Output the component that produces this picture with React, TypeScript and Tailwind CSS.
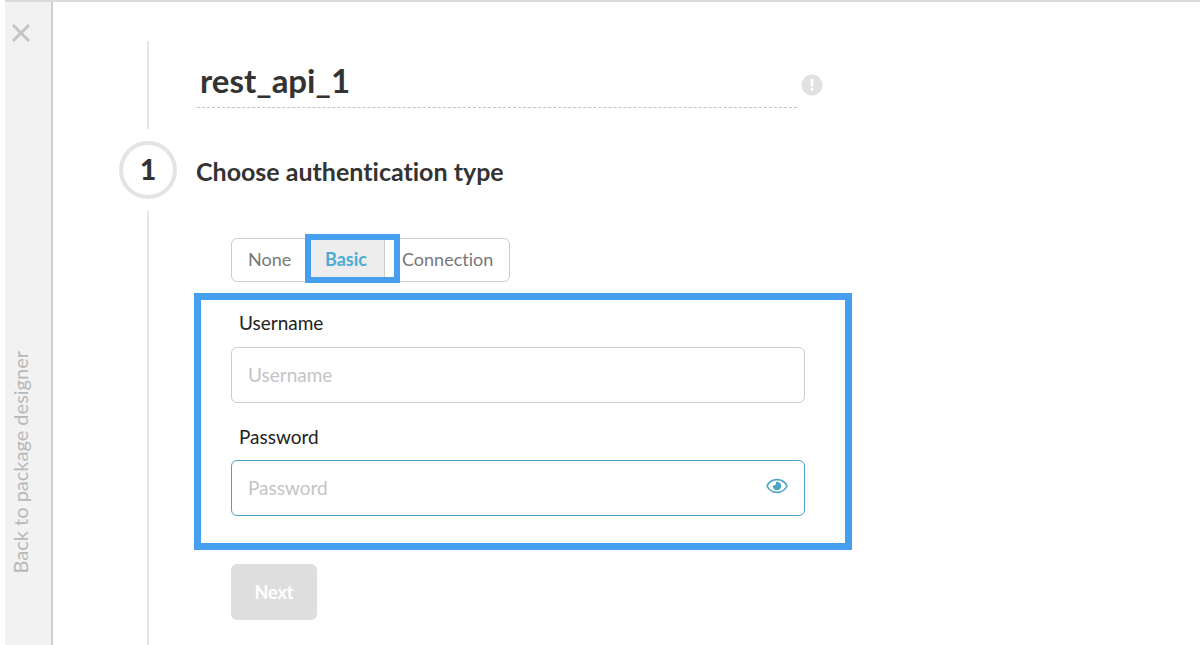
import { useState } from "react";

const types = [
  { name: "None", size: "w-[76px] pl-4" },
  { name: "Basic", size: "w-[77px] pl-[17px]" },
  { name: "Connection", size: "w-[124px] pl-[17px]" },
];

function Sidebar() {
  return (
    <aside className="flex w-12 shrink-0 flex-col items-start justify-between border-r-2 border-[#cfcfcf] bg-[#f2f2f2] pt-[21px] pb-[72px]">
      <button type="button" aria-label="Close" className="ml-[6px]">
        <svg className="h-5 w-5" viewBox="0 0 20 20" fill="none" stroke="#c4c4c4" strokeWidth="3">
          <path d="M2 2 18 18M18 2 2 18" />
        </svg>
      </button>
      <a href="#designer" className="ml-[3px] rotate-180 text-xl leading-6 whitespace-nowrap text-[#b8b8b8] [writing-mode:vertical-rl]">
        Back to package designer
      </a>
    </aside>
  );
}

function Timeline() {
  return (
    <div className="flex w-[58px] shrink-0 flex-col items-center pt-[39px]">
      <div className="h-[88px] w-0.5 bg-[#e6e6e6]" />
      <div className="my-3 flex h-[58px] w-[58px] shrink-0 items-center justify-center rounded-full border-4 border-[#e4e4e4] pb-0.5 text-[28px] leading-8 font-black">
        1
      </div>
      <div className="w-0.5 flex-1 bg-[#e6e6e6]" />
    </div>
  );
}

function EyeIcon() {
  return (
    <svg className="h-4 w-[22px]" viewBox="0 0 22 16" fill="none">
      <path d="M1 8C5-.5 17-.5 21 8 17 16.500 5 16.500 1 8Z" stroke="#4ba3c7" strokeWidth="1.600" />
      <circle cx="11" cy="8" r="4.200" fill="#4ba3c7" />
      <path d="M6.500 3.500H10V5.600A1.900 1.900 0 0 1 8.200 7.400H6.500Z" fill="#fff" />
    </svg>
  );
}

export default function App() {
  const [active, setActive] = useState("Basic");
  const [title, setTitle] = useState("rest_api_1");
  const field =
    "h-14 w-full rounded-md border bg-white px-4 pb-0.5 text-[19px] outline-none placeholder:text-[#c4c4c4] placeholder:opacity-100";

  return (
    <div className="flex min-h-screen bg-white pl-[5px] font-['Lato',sans-serif] text-[#333] [font-variant-ligatures:none]">
      <div className="flex flex-1 border-t-2 border-[#dadada]">
        <Sidebar />
        <main className="flex min-w-0 flex-1 pl-[66px]">
          <Timeline />
          <form className="ml-[17px] w-full max-w-[658px]" onSubmit={(e) => e.preventDefault()}>
            <div className="flex items-center pt-[55px] pl-[3px]">
              <input
                aria-label="Name"
                value={title}
                onChange={(e) => setTitle(e.target.value)}
                className="h-[51px] w-full max-w-[600px] border-b border-dashed border-[#c4c4c4] pb-1 pl-[3px] text-[33px] font-bold outline-none"
              />
              <svg className="mt-1 ml-1 h-[22px] w-[22px] shrink-0" viewBox="0 0 22 22">
                <circle cx="11" cy="11" r="10.500" fill="#e1e1e1" />
                <path d="M9.400 5h3.200l-.4 7.500H9.800ZM9.600 14h2.800v2.600H9.600Z" fill="#fff" />
              </svg>
            </div>
            <h2 className="mt-[47px] mb-[51px] pl-[2px] text-[25px] leading-8 font-bold">Choose authentication type</h2>
            <div className="ml-[37px] flex h-11 w-fit rounded-md border border-[#cdcdcd] text-lg text-[#777]">
              {types.map((t) => (
                <button
                  key={t.name}
                  type="button"
                  aria-pressed={active === t.name}
                  onClick={() => setActive(t.name)}
                  className={`relative pb-0.5 text-left ${t.size} ${
                    active === t.name ? "border-r border-[#cdcdcd] bg-[#ededed] font-bold text-[#4bacd6]" : ""
                  }`}
                >
                  {t.name}
                  {active === t.name && (
                    <span className="pointer-events-none absolute -top-[5px] -right-4 -bottom-[2px] -left-[3px] border-6 border-[#459fee]" />
                  )}
                </button>
              ))}
            </div>
            <section className="mt-[11px] border-[7px] border-[#459fee] pt-[11px] pr-10 pb-[27px] pl-[30px]">
              <label htmlFor="username" className="block pl-2 text-[19px] leading-6 text-[#222]">
                Username
              </label>
              <input id="username" placeholder="Username" className={`mt-3 border-[#cdcdcd] ${field}`} />
              <label htmlFor="password" className="mt-[22px] block pl-2 text-[19px] leading-6 text-[#222]">
                Password
              </label>
              <div className="relative mt-[11px]">
                <input
                  id="password"
                  type="password"
                  placeholder="Password"
                  className={`border-[#4ba3c7] ${field}`}
                />
                <button type="button" aria-label="Show password" className="absolute inset-y-0 right-[17px] pb-1">
                  <EyeIcon />
                </button>
              </div>
            </section>
            <button type="submit" className="mt-[14px] ml-[37px] h-14 w-[86px] rounded-md bg-[#dedede] text-lg font-bold text-white">
              Next
            </button>
          </form>
        </main>
      </div>
    </div>
  );
}
